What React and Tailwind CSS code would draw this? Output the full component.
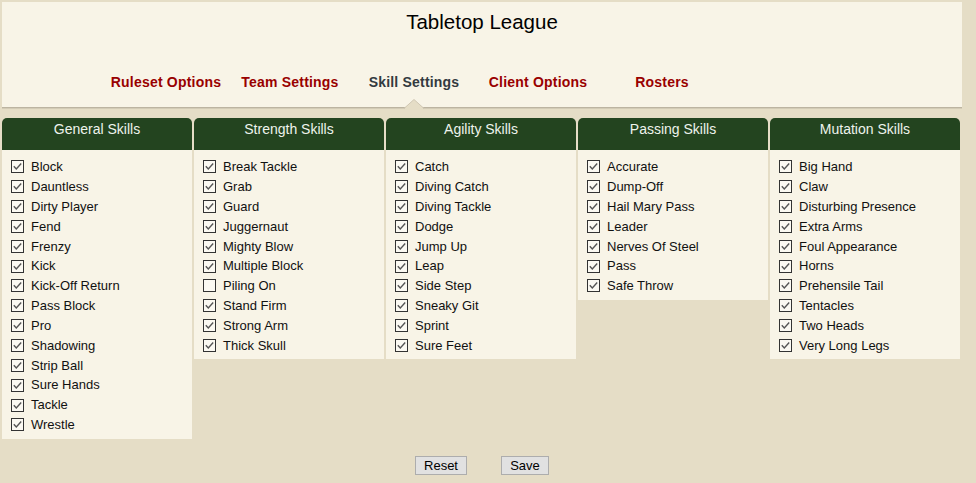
import React from 'react';

const columns = [
  {
    title: 'General Skills',
    skills: ['Block', 'Dauntless', 'Dirty Player', 'Fend', 'Frenzy', 'Kick', 'Kick-Off Return', 'Pass Block', 'Pro', 'Shadowing', 'Strip Ball', 'Sure Hands', 'Tackle', 'Wrestle'],
  },
  {
    title: 'Strength Skills',
    skills: ['Break Tackle', 'Grab', 'Guard', 'Juggernaut', 'Mighty Blow', 'Multiple Block', 'Piling On', 'Stand Firm', 'Strong Arm', 'Thick Skull'],
    unchecked: ['Piling On'],
  },
  {
    title: 'Agility Skills',
    skills: ['Catch', 'Diving Catch', 'Diving Tackle', 'Dodge', 'Jump Up', 'Leap', 'Side Step', 'Sneaky Git', 'Sprint', 'Sure Feet'],
  },
  {
    title: 'Passing Skills',
    skills: ['Accurate', 'Dump-Off', 'Hail Mary Pass', 'Leader', 'Nerves Of Steel', 'Pass', 'Safe Throw'],
  },
  {
    title: 'Mutation Skills',
    skills: ['Big Hand', 'Claw', 'Disturbing Presence', 'Extra Arms', 'Foul Appearance', 'Horns', 'Prehensile Tail', 'Tentacles', 'Two Heads', 'Very Long Legs'],
  },
];

const tabs = ['Ruleset Options', 'Team Settings', 'Skill Settings', 'Client Options', 'Rosters'];

const CheckBox = ({ checked }) => (
  <svg width="13" height="13" viewBox="0 0 13 13" className="shrink-0">
    <rect x="0.5" y="0.5" width="12" height="12" fill="#fbf9f2" stroke="#333333" />
    {checked && <polyline points="2.8,6.2 5.3,8.9 10.2,3.6" fill="none" stroke="#555555" strokeWidth="1.4" />}
  </svg>
);

const SkillColumn = ({ col }) => (
  <div className="w-[190px]">
    <div className="h-[32px] bg-[#23441f] rounded-t-[5px] pt-[2px] text-center text-[14px] leading-[18px] text-[#eef3ec]">
      {col.title}
    </div>
    <div className="bg-[#f8f4e7] pt-[7px] pb-[4px]">
      {col.skills.map((s) => (
        <label key={s} className="flex items-center h-[19.85px] pl-[9px] gap-[7px] text-[13px] text-[#111]">
          <CheckBox checked={!(col.unchecked || []).includes(s)} />
          <span>{s}</span>
        </label>
      ))}
    </div>
  </div>
);

export default function App() {
  return (
    <div className="min-h-[483px] bg-[#e5ddc6] pt-[2px] px-[2px]" style={{ fontFamily: '"Liberation Sans", Arial, sans-serif' }}>
      {/* Header */}
      <div className="w-[960px] bg-[#f8f4e7] border-b border-[#bcb4a1] shadow-[0_1px_0_#d3cbb6]">
        <h1 className="text-center text-[20.5px] leading-[24px] pt-[8px] text-black">Tabletop League</h1>
        <nav className="flex pl-[102px] mt-[36px] h-[37px]">
          {tabs.map((t) => {
            const active = t === 'Skill Settings';
            return (
              <div key={t} className="relative w-[124px] text-center">
                <a href="#" className={`text-[14px] font-bold leading-[20px] tracking-[0.2px] ${active ? 'text-[#333a3f]' : 'text-[#990000]'}`}>
                  {t}
                </a>
                {active && (
                  <svg width="20" height="10" viewBox="0 0 20 10" className="absolute left-1/2 -translate-x-1/2 bottom-[-2px]">
                    <polygon points="0,9.5 10,0.5 20,9.5" fill="#e5ddc6" stroke="#cfc7b3" />
                    <rect x="1" y="9" width="18" height="1" fill="#e5ddc6" />
                  </svg>
                )}
              </div>
            );
          })}
        </nav>
      </div>

      {/* Skill columns */}
      <div className="flex items-start gap-[2px] mt-[10px]">
        {columns.map((c) => (
          <SkillColumn key={c.title} col={c} />
        ))}
      </div>

      {/* Buttons */}
      <div className="w-[960px] flex justify-center gap-[34px] mt-[17px]">
        <button className="w-[52px] h-[19px] bg-[#e1e1e1] border border-[#adadad] text-[13px] leading-[17px] text-black">Reset</button>
        <button className="w-[48px] h-[19px] bg-[#e1e1e1] border border-[#adadad] text-[13px] leading-[17px] text-black">Save</button>
      </div>
    </div>
  );
}
